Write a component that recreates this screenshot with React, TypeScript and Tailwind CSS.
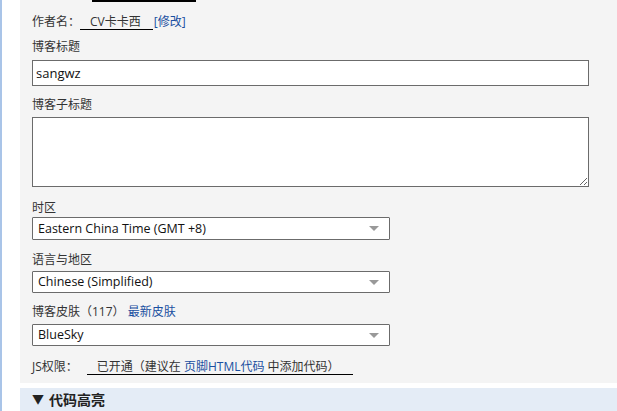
import React from "react"

const font = "font-['Open_Sans','Noto_Sans_CJK_SC',sans-serif]"

function Label({ children, className = "" }: { children: React.ReactNode; className?: string }) {
  return <div className={`h-5 pt-[2px] flex items-center text-[12px] text-[#333] ${className}`}>{children}</div>
}

function FakeSelect({ value, className = "" }: { value: string; className?: string }) {
  return (
    <div
      className={`w-[358px] flex items-center justify-between bg-white border border-[#6b6b6b] rounded-[1px] pl-[5px] pr-[10px] text-[12.5px] text-[#111] ${className}`}
    >
      <span className="pt-px">{value}</span>
      <span className="w-0 h-0 border-l-[5px] border-r-[5px] border-t-[5px] border-l-transparent border-r-transparent border-t-[#999]" />
    </div>
  )
}

export default function App() {
  return (
    <div className={`w-[617px] h-[411px] overflow-hidden bg-white flex ${font}`}>
      <div className="w-[2px] bg-[#a9c4e8]" />
      <div className="w-[18px]" />
      <div className="flex-1 flex flex-col">
        <div className="bg-[#f4f4f4] pl-3 pr-7 pb-[7px] flex flex-col">
          <div className="ml-[60px] w-[104px] h-[2px] bg-black" />
          <div className="mt-[9px] h-5 pt-[2px] flex items-center text-[12px] text-[#333]">
            <span>作者名：</span>
            <span className="border-b border-black pl-[10px] pr-[12px] leading-[15px]">CV卡卡西</span>
            <a className="text-[#1a4fa0] ml-px">[修改]</a>
          </div>
          <Label className="mt-[5px]">博客标题</Label>
          <input
            defaultValue="sangwz"
            className="mt-[4px] h-[26px] w-[557px] bg-white border border-[#6b6b6b] px-[3px] text-[13px] text-[#111] outline-none"
          />
          <Label className="mt-[8px]">博客子标题</Label>
          <textarea className="mt-[3px] h-[70px] w-[557px] bg-white border border-[#6b6b6b] outline-none block" />
          <Label className="mt-[10px]">时区</Label>
          <FakeSelect className="h-[23px]" value="Eastern China Time (GMT +8)" />
          <Label className="mt-[9px]">语言与地区</Label>
          <FakeSelect className="mt-[2px] h-[22px]" value="Chinese (Simplified)" />
          <Label className="mt-[8px]">
            博客皮肤（117）&nbsp;<a className="text-[#1a4fa0]">最新皮肤</a>
          </Label>
          <FakeSelect className="mt-[3px] h-[22px]" value="BlueSky" />
          <div className="mt-[10px] h-5 pt-[2px] flex items-center text-[12px] text-[#333]">
            <span>JS权限：</span>
            <span className="ml-[9px] border-b border-black pl-[10px] pr-[13px] leading-[15px]">
              已开通（建议在 <a className="text-[#1a4fa0]">页脚HTML代码</a> 中添加代码）
            </span>
          </div>
        </div>
        <div className="h-[5px]" />
        <div className="h-[23px] bg-[#e4ecf6] pl-3 flex items-center text-[14px] font-bold text-[#222]">
          <span className="text-[12px] mr-[5px]">▼</span>代码高亮
        </div>
      </div>
    </div>
  )
}
